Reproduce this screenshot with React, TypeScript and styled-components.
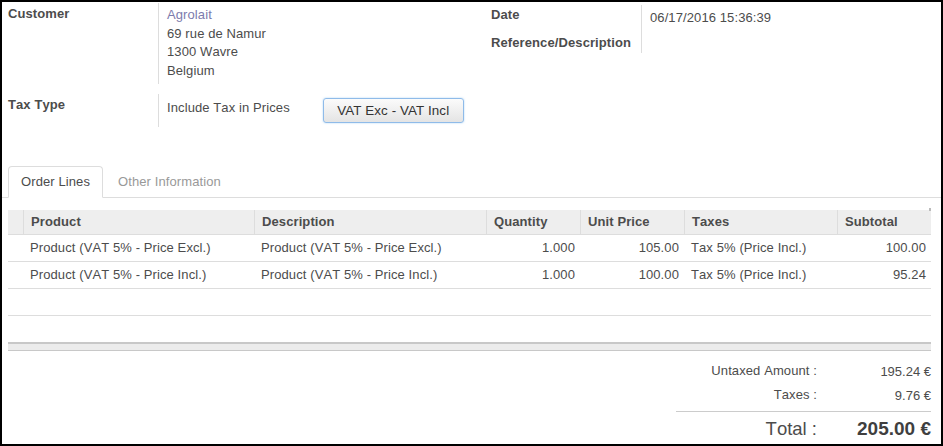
import React from "react";
import styled, { createGlobalStyle } from "styled-components";

const GlobalStyle = createGlobalStyle`
  html, body { margin: 0; padding: 0; background: #000; }
  body {
    font-family: "Liberation Sans", Arial, Helvetica, sans-serif;
    font-size: 13px;
    color: #4c4c4c;
    font-kerning: none;
    letter-spacing: 0.1px;
  }
  * { box-sizing: border-box; }
`;

const Frame = styled.div`
  width: 943px;
  height: 446px;
  border: 2px solid #000;
  background: #fff;
  overflow: hidden;
`;

const TopSection = styled.div`
  display: grid;
  grid-template-columns: 483px 1fr;
  padding: 1px 10px 0 6px;
`;

const Group = styled.div<{ $gap: number; $top: number }>`
  display: flex;
  flex-direction: column;
  gap: ${(p) => p.$gap}px;
  padding-top: ${(p) => p.$top}px;
`;

const FieldRow = styled.div<{ $h: number }>`
  display: grid;
  grid-template-columns: 150px 1fr;
  min-height: ${(p) => p.$h}px;
`;

const Label = styled.div<{ $pt: number }>`
  font-weight: bold;
  line-height: 18.57px;
  padding-top: ${(p) => p.$pt}px;
`;

const Value = styled.div<{ $pt: number; $pb?: number }>`
  border-left: 1px solid #ddd;
  padding: ${(p) => p.$pt}px 0 ${(p) => p.$pb ?? 0}px 8px;
  line-height: 18.57px;
`;

const InlineValue = styled(Value)`
  display: flex;
  align-items: flex-start;
`;

const TaxText = styled.span`
  padding-top: 1px;
`;

const Link = styled.div`
  color: #7c7bad;
`;

const ModeButton = styled.button`
  margin-left: 33px;
  width: 141px;
  height: 25px;
  padding: 2px 0 0;
  font-family: inherit;
  font-size: 13.4px;
  letter-spacing: 0.1px;
  line-height: 18.57px;
  color: #333;
  border: 1px solid #8fbbe9;
  border-radius: 3px;
  background: linear-gradient(#fbfbfb, #e4e4e4);
  box-shadow: 0 0 2px rgba(102, 175, 233, 0.55);
`;

const TabBar = styled.ul`
  list-style: none;
  margin: 39px 0 0;
  padding: 0 0 0 6px;
  display: flex;
  border-bottom: 1px solid #ddd;
`;

const Tab = styled.li<{ $active?: boolean }>`
  margin: 0 2px -1px 0;
  padding: 5.5px 12px 5.93px;
  line-height: 18.57px;
  border: 1px solid ${(p) => (p.$active ? "#ddd" : "transparent")};
  border-bottom-color: ${(p) => (p.$active ? "#fff" : "transparent")};
  border-radius: 4px 4px 0 0;
  background: ${(p) => (p.$active ? "#fff" : "transparent")};
  color: ${(p) => (p.$active ? "#4c4c4c" : "#999")};
`;

const ListSection = styled.div`
  padding: 12px 10px 0 6px;
`;

const TableWrap = styled.div`
  position: relative;
  &::after {
    content: "";
    position: absolute;
    top: -2px;
    right: 0;
    width: 2px;
    height: 3px;
    background: #bbb;
  }
`;

const Table = styled.table`
  width: 923px;
  table-layout: fixed;
  border-collapse: separate;
  border-spacing: 0;
`;

const Th = styled.th`
  background: #eee;
  font-weight: bold;
  text-align: left;
  line-height: 20px;
  height: 25px;
  padding: 2px 5px 2px 7px;
  border-bottom: 1px solid #ddd;
  border-left: 1px solid #ddd;
  white-space: nowrap;
  overflow: hidden;
  &:first-child { border-left: none; }
`;

const Td = styled.td<{ $num?: boolean }>`
  line-height: 20px;
  height: 27px;
  padding: 3px 5px 3px 7px;
  border-bottom: 1px solid #ddd;
  text-align: ${(p) => (p.$num ? "right" : "left")};
  white-space: nowrap;
  overflow: hidden;
`;

const EmptyTd = styled.td`
  height: 27px;
  padding: 0;
  border-bottom: 1px solid #ddd;
`;

const FooterBar = styled.div`
  margin-top: 26px;
  height: 9px;
  background: #ececec;
  border-top: 2px solid #c8c8c8;
  border-bottom: 1px solid #c8c8c8;
`;

const TotalsArea = styled.div`
  display: flex;
  justify-content: flex-end;
  padding: 7px 10px 0 6px;
`;

const Totals = styled.div`
  width: 255px;
  display: grid;
  grid-template-columns: 141px 114px;
  grid-auto-rows: 24px;
`;

const TotLabel = styled.div`
  text-align: right;
  line-height: 18.57px;
  padding-top: 3.7px;
`;

const TotValue = styled.div`
  text-align: right;
  line-height: 18.57px;
  padding-top: 5.5px;
  letter-spacing: 0;
`;

const GrandRow = styled.div`
  grid-column: 1 / -1;
  display: grid;
  grid-template-columns: 141px 114px;
  margin-top: 5px;
  border-top: 1px solid #ccc;
  padding-top: 3px;
  line-height: 27px;
  height: 32px;
`;

const GrandLabel = styled.div`
  text-align: right;
  font-size: 18.5px;
  letter-spacing: 0;
`;

const GrandValue = styled.div`
  text-align: right;
  font-size: 19px;
  font-weight: bold;
  letter-spacing: 0;
  color: #3f3f3f;
`;

const columns = [15, 231, 232, 94, 104, 153, 94];

const lines = [
  { product: "Product (VAT 5% - Price Excl.)", qty: "1.000", price: "105.00", tax: "Tax 5% (Price Incl.)", sub: "100.00" },
  { product: "Product (VAT 5% - Price Incl.)", qty: "1.000", price: "100.00", tax: "Tax 5% (Price Incl.)", sub: "95.24" },
];

export default function App() {
  return (
    <>
      <GlobalStyle />
      <Frame>
        <TopSection>
          <Group $gap={10} $top={0}>
            <FieldRow $h={81}>
              <Label $pt={2.4}>Customer</Label>
              <Value $pt={3.2} $pb={3}>
                <Link>Agrolait</Link>
                <div>69 rue de Namur</div>
                <div>1300 Wavre</div>
                <div>Belgium</div>
              </Value>
            </FieldRow>
            <FieldRow $h={33}>
              <Label $pt={2.4}>Tax Type</Label>
              <InlineValue $pt={4}>
                <TaxText>Include Tax in Prices</TaxText>
                <ModeButton>VAT Exc - VAT Incl</ModeButton>
              </InlineValue>
            </FieldRow>
          </Group>
          <Group $gap={0} $top={2}>
            <FieldRow $h={26}>
              <Label $pt={1}>Date</Label>
              <Value $pt={4}>06/17/2016 15:36:39</Value>
            </FieldRow>
            <FieldRow $h={22}>
              <Label $pt={3}>Reference/Description</Label>
              <Value $pt={2} />
            </FieldRow>
          </Group>
        </TopSection>

        <TabBar>
          <Tab $active>Order Lines</Tab>
          <Tab>Other Information</Tab>
        </TabBar>

        <ListSection>
          <TableWrap>
            <Table>
              <colgroup>
                {columns.map((w, i) => (
                  <col key={i} style={{ width: w }} />
                ))}
              </colgroup>
              <thead>
                <tr>
                  <Th />
                  <Th>Product</Th>
                  <Th>Description</Th>
                  <Th>Quantity</Th>
                  <Th>Unit Price</Th>
                  <Th>Taxes</Th>
                  <Th>Subtotal</Th>
                </tr>
              </thead>
              <tbody>
                {lines.map((l, i) => (
                  <tr key={i}>
                    <Td />
                    <Td>{l.product}</Td>
                    <Td>{l.product}</Td>
                    <Td $num>{l.qty}</Td>
                    <Td $num>{l.price}</Td>
                    <Td>{l.tax}</Td>
                    <Td $num>{l.sub}</Td>
                  </tr>
                ))}
                <tr>
                  <EmptyTd colSpan={7} />
                </tr>
              </tbody>
            </Table>
          </TableWrap>
          <FooterBar />
        </ListSection>

        <TotalsArea>
          <Totals>
            <TotLabel>Untaxed Amount :</TotLabel>
            <TotValue>195.24 €</TotValue>
            <TotLabel>Taxes :</TotLabel>
            <TotValue>9.76 €</TotValue>
            <GrandRow>
              <GrandLabel>Total :</GrandLabel>
              <GrandValue>205.00 €</GrandValue>
            </GrandRow>
          </Totals>
        </TotalsArea>
      </Frame>
    </>
  );
}
